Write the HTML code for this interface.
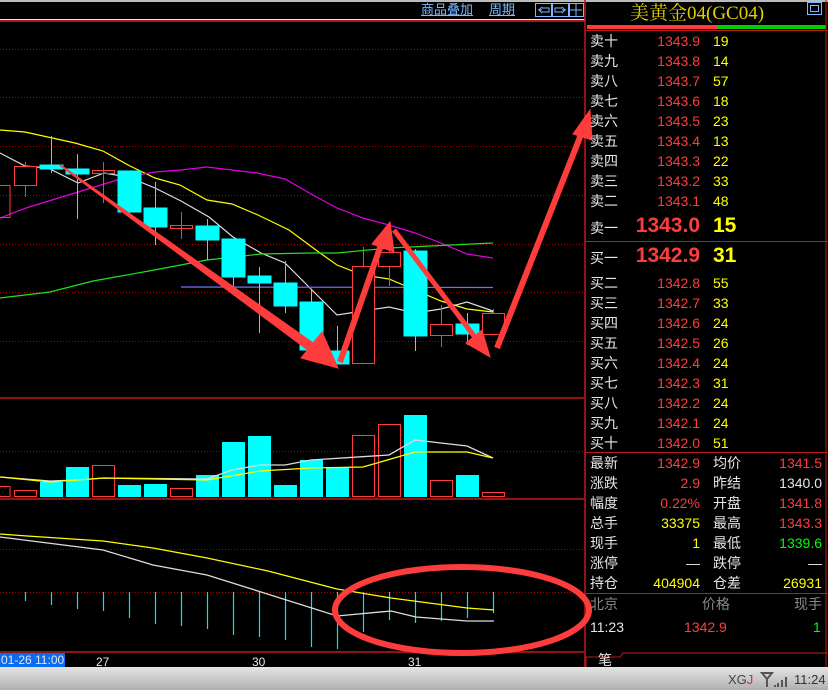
<!DOCTYPE html>
<html><head><meta charset="utf-8"><style>
*{margin:0;padding:0;box-sizing:border-box}
body{width:828px;height:690px;background:#000;overflow:hidden;position:relative;font-family:"Liberation Sans","Noto Sans CJK SC",sans-serif;}
.t{position:absolute;white-space:nowrap;font-size:14px;line-height:16px}
.w{color:#e6e6e6}.r{color:#ff3c3c}.y{color:#ffff00}.g{color:#00ff00}.gr{color:#8a8a8a}
.ra{text-align:right}
</style></head><body>
<svg width="828" height="690" style="position:absolute;left:0;top:0" xmlns="http://www.w3.org/2000/svg">
<rect x="0" y="0" width="828" height="2" fill="#bbb"/>
<line x1="0" y1="19.5" x2="585" y2="19.5" fill="none" stroke="#eee" stroke-width="1"/>
<line x1="0" y1="21" x2="585" y2="21" stroke="#e02020" stroke-width="1.5"/>
<g stroke="#a00" stroke-dasharray="1,2" stroke-width="1">
<line x1="0" y1="49.5" x2="584" y2="49.5"/><line x1="0" y1="97.5" x2="584" y2="97.5"/>
<line x1="0" y1="146.5" x2="584" y2="146.5"/><line x1="0" y1="195.5" x2="584" y2="195.5"/>
<line x1="0" y1="244.5" x2="584" y2="244.5"/><line x1="0" y1="292.5" x2="584" y2="292.5"/>
<line x1="0" y1="341.5" x2="584" y2="341.5"/><line x1="0" y1="451.5" x2="584" y2="451.5"/>
<line x1="0" y1="549.5" x2="584" y2="549.5"/><line x1="0" y1="592.5" x2="584" y2="592.5"/>
</g>
<line x1="0" y1="398" x2="584" y2="398" stroke="#c01818" stroke-width="1.5"/>
<line x1="0" y1="499" x2="584" y2="499" stroke="#c01818" stroke-width="1.5"/>
<line x1="0" y1="652" x2="584" y2="652" stroke="#c01818" stroke-width="1.5"/>
<line x1="585" y1="0" x2="585" y2="667" stroke="#c01818" stroke-width="1.5"/>
<g fill="none" stroke-width="1.2">
<polyline stroke="#ffff00" points="0,130 25,132 75,143 103,151 130,166 155,178 180,185 207,200 232,204 258,215 289,230 320,253 337,265 363,275 389,279 415,290 441,301 467,309 493,312"/>
<polyline stroke="#ddd" points="0,153 25,166 48,168 78,183 104,173 128,177 155,188 181,201 209,217 233,237 261,253 285,263 311,289 337,315 363,311 389,307 415,313 441,309 467,302 493,311"/>
<polyline stroke="#e000e0" points="0,218 26,208 78,192 127,177 155,172 181,170 207,167 257,173 285,179 311,194 337,208 363,218 389,225 415,233 441,243 467,254 493,258"/>
<polyline stroke="#20e020" points="0,298 50,292 93,281 149,271 207,260 261,254 311,253 337,253 389,248 493,243"/>
<line x1="181" y1="287" x2="493" y2="287.5" stroke="#7070ff"/>
</g>
<g stroke-width="1">
<g stroke="#ff3c3c" fill="none">
<rect x="-12" y="185.5" width="22" height="32"/>
<line x1="25.5" y1="162" x2="25.5" y2="197"/><rect x="14.5" y="166.5" width="22" height="19" fill="#000"/>
<line x1="103.5" y1="162" x2="103.5" y2="203"/><rect x="92.5" y="170.5" width="22" height="3"/>
<line x1="181.5" y1="212" x2="181.5" y2="239"/><rect x="170.5" y="225.5" width="22" height="3"/>
<line x1="363.5" y1="247" x2="363.5" y2="364"/><rect x="352.5" y="266.5" width="22" height="97" fill="#000"/>
<line x1="389.5" y1="230" x2="389.5" y2="286"/><rect x="378.5" y="252.5" width="22" height="14" fill="#000"/>
<line x1="441.5" y1="305" x2="441.5" y2="347"/><rect x="430.5" y="324.5" width="22" height="11" fill="#000"/>
<line x1="493.5" y1="309" x2="493.5" y2="314"/><rect x="482.5" y="313.5" width="22" height="21" fill="#000"/>
</g>
<g stroke="#00ffff" fill="#00ffff">
<line x1="51.5" y1="136" x2="51.5" y2="173"/><rect x="40" y="165" width="23" height="4"/>
<line x1="77.5" y1="154" x2="77.5" y2="219"/><rect x="66" y="169" width="23" height="5"/>
<line x1="129.5" y1="171" x2="129.5" y2="217"/><rect x="118" y="171" width="23" height="41"/>
<line x1="155.5" y1="182" x2="155.5" y2="245"/><rect x="144" y="208" width="23" height="19"/>
<line x1="207.5" y1="219" x2="207.5" y2="260"/><rect x="196" y="226" width="23" height="14"/>
<line x1="233.5" y1="239" x2="233.5" y2="290"/><rect x="222" y="239" width="23" height="38"/>
<line x1="259.5" y1="267" x2="259.5" y2="333"/><rect x="248" y="276" width="23" height="7"/>
<line x1="285.5" y1="261" x2="285.5" y2="313"/><rect x="274" y="283" width="23" height="23"/>
<line x1="311.5" y1="290" x2="311.5" y2="350"/><rect x="300" y="302" width="23" height="48"/>
<line x1="337.5" y1="326" x2="337.5" y2="364"/><rect x="326" y="351" width="23" height="13"/>
<line x1="415.5" y1="249" x2="415.5" y2="351"/><rect x="404" y="251" width="23" height="85"/>
<line x1="467.5" y1="313" x2="467.5" y2="345"/><rect x="456" y="324" width="23" height="10"/>
</g>
</g>
<g fill="none" stroke="#ff3c3c">
<rect x="-12" y="486.5" width="22" height="10"/><rect x="14.5" y="490.5" width="22" height="6"/>
<rect x="92.5" y="465.5" width="22" height="31"/><rect x="170.5" y="488.5" width="22" height="8"/>
<rect x="352.5" y="435.5" width="22" height="61"/><rect x="378.5" y="424.5" width="22" height="72"/>
<rect x="430.5" y="480.5" width="22" height="16"/><rect x="482.5" y="492.5" width="22" height="4"/>
</g>
<g fill="#00ffff">
<rect x="40" y="482" width="23" height="15"/><rect x="66" y="467" width="23" height="30"/>
<rect x="118" y="485" width="23" height="12"/><rect x="144" y="484" width="23" height="13"/>
<rect x="196" y="475" width="23" height="22"/><rect x="222" y="442" width="23" height="55"/>
<rect x="248" y="436" width="23" height="61"/><rect x="274" y="485" width="23" height="12"/>
<rect x="300" y="460" width="23" height="37"/><rect x="326" y="467" width="23" height="30"/>
<rect x="404" y="415" width="23" height="82"/><rect x="456" y="475" width="23" height="22"/>
</g>
<g fill="none" stroke-width="1.3">
<polyline stroke="#ddd" points="0,477 50,481 78,480 104,478 207,479 232,470 260,465 285,465 311,460 389,455 415,440 467,446 493,458"/>
<polyline stroke="#ffff00" points="0,477 50,482 104,478 207,480 260,471 311,468 363,467 415,452 467,452 493,458"/>
</g>
<g stroke="#00e5f0" stroke-width="1.2">
<line x1="25.5" y1="592" x2="25.5" y2="601"/><line x1="51.5" y1="592" x2="51.5" y2="605"/>
<line x1="77.5" y1="592" x2="77.5" y2="609"/><line x1="103.5" y1="592" x2="103.5" y2="611"/>
<line x1="129.5" y1="592" x2="129.5" y2="618"/><line x1="155.5" y1="592" x2="155.5" y2="624"/>
<line x1="181.5" y1="592" x2="181.5" y2="626"/><line x1="207.5" y1="592" x2="207.5" y2="629"/>
<line x1="233.5" y1="592" x2="233.5" y2="635"/><line x1="259.5" y1="592" x2="259.5" y2="637"/>
<line x1="285.5" y1="592" x2="285.5" y2="640"/><line x1="311.5" y1="592" x2="311.5" y2="647"/>
<line x1="337.5" y1="592" x2="337.5" y2="649"/><line x1="363.5" y1="592" x2="363.5" y2="632"/>
<line x1="389.5" y1="592" x2="389.5" y2="620"/><line x1="415.5" y1="592" x2="415.5" y2="623"/>
<line x1="441.5" y1="592" x2="441.5" y2="621"/><line x1="467.5" y1="592" x2="467.5" y2="618"/>
<line x1="493.5" y1="592" x2="493.5" y2="613"/>
</g>
<g fill="none" stroke-width="1.3">
<polyline stroke="#ffff00" points="0,534 27,536 103,541 153,548 207,558 268,571 337,589 391,598 467,608 494,610"/>
<polyline stroke="#ddd" points="0,537 103,550 153,565 207,575 261,592 337,616 391,611 416,617 467,621 494,621"/>
</g>
<ellipse cx="462" cy="610" rx="127" ry="43" fill="none" stroke="#ff3c3c" stroke-width="6"/>
<g fill="#ff3c3c" stroke="#ff3c3c" stroke-linecap="butt">
<polygon points="60.6,164.2 320.9,347.9 315.1,356.1 59.4,165.8" stroke="none"/>
<polygon points="338,368 301,358 322,332"/>
<line x1="340" y1="362" x2="382" y2="242" stroke-width="6"/>
<polygon points="390,222 394,252 372,244"/>
<line x1="394" y1="230" x2="477" y2="340" stroke-width="5"/>
<polygon points="490,357 466,343 482,330"/>
<line x1="497" y1="348" x2="582" y2="132" stroke-width="6"/>
<polygon points="590,110 592,140 573,134"/>
</g>
<g fill="none" stroke="#7ab8ff" stroke-width="1">
<rect x="535.5" y="3.5" width="16" height="13"/><rect x="552.5" y="3.5" width="16" height="13"/><rect x="569.5" y="3.5" width="14" height="13"/>
<path d="M538 10h4M542 7l-3 3 3 3M542 8h7v4h-7M566 10h-4M562 7l3 3-3 3M562 8h-7v4h7M570 10h12M576 4v12"/>
<rect x="807.5" y="2.5" width="14" height="12"/><rect x="810.5" y="5.5" width="8" height="6"/>
</g>
<rect x="587" y="25" width="130" height="4" fill="#ff3c3c"/><rect x="717" y="25" width="109" height="4" fill="#00d000"/>
<line x1="585" y1="30.5" x2="828" y2="30.5" stroke="#c01818"/>
<line x1="585" y1="241.5" x2="828" y2="241.5" stroke="#c01818"/>
<line x1="585" y1="452.5" x2="828" y2="452.5" stroke="#c01818"/>
<line x1="585" y1="593.5" x2="828" y2="593.5" stroke="#c01818"/>
<path d="M586 667V657h34l3-4h205" fill="none" stroke="#c01818"/>
<line x1="826" y1="0" x2="826" y2="667" stroke="#c01818"/>
<defs><linearGradient id="gb" x1="0" y1="0" x2="0" y2="1"><stop offset="0" stop-color="#e4e4e4"/><stop offset="1" stop-color="#b0b0b0"/></linearGradient></defs>
<rect x="0" y="667" width="828" height="23" fill="url(#gb)"/>
<rect x="0" y="653" width="65" height="14" fill="#0a6cf0"/>
<path d="M762 673h10l-5 6zM767 679v8M774 686h2M778 683v4M782 680v7M786 677v10" stroke="#555" stroke-width="2" fill="none"/>
</svg>
<div class="t" style="left:421px;top:2px;color:#7ab8ff;text-decoration:underline;font-size:13px">商品叠加</div>
<div class="t" style="left:489px;top:2px;color:#7ab8ff;text-decoration:underline;font-size:13px">周期</div>
<div class="t" style="left:630px;top:4px;color:#e0d000;font-size:19px;line-height:20px;font-family:'Liberation Serif','Noto Serif CJK SC',serif">美黄金04(GC04)</div>
<div class="t w" style="left:1px;top:654px;font-size:12px;line-height:13px">01-26 11:00</div>
<div class="t w" style="left:96px;top:654px;font-size:12px">27</div>
<div class="t w" style="left:252px;top:654px;font-size:12px">30</div>
<div class="t w" style="left:408px;top:654px;font-size:12px">31</div>
<div style="position:absolute;left:590px;top:33px;width:236px;font-size:14px">
<div style="position:relative;height:200px">
<div class="t w" style="left:0;top:0">卖十</div><div class="t r ra" style="left:40px;width:70px;top:0">1343.9</div><div class="t y" style="left:123px;top:0">19</div>
<div class="t w" style="left:0;top:20px">卖九</div><div class="t r ra" style="left:40px;width:70px;top:20px">1343.8</div><div class="t y" style="left:123px;top:20px">14</div>
<div class="t w" style="left:0;top:40px">卖八</div><div class="t r ra" style="left:40px;width:70px;top:40px">1343.7</div><div class="t y" style="left:123px;top:40px">57</div>
<div class="t w" style="left:0;top:60px">卖七</div><div class="t r ra" style="left:40px;width:70px;top:60px">1343.6</div><div class="t y" style="left:123px;top:60px">18</div>
<div class="t w" style="left:0;top:80px">卖六</div><div class="t r ra" style="left:40px;width:70px;top:80px">1343.5</div><div class="t y" style="left:123px;top:80px">23</div>
<div class="t w" style="left:0;top:100px">卖五</div><div class="t r ra" style="left:40px;width:70px;top:100px">1343.4</div><div class="t y" style="left:123px;top:100px">13</div>
<div class="t w" style="left:0;top:120px">卖四</div><div class="t r ra" style="left:40px;width:70px;top:120px">1343.3</div><div class="t y" style="left:123px;top:120px">22</div>
<div class="t w" style="left:0;top:140px">卖三</div><div class="t r ra" style="left:40px;width:70px;top:140px">1343.2</div><div class="t y" style="left:123px;top:140px">33</div>
<div class="t w" style="left:0;top:160px">卖二</div><div class="t r ra" style="left:40px;width:70px;top:160px">1343.1</div><div class="t y" style="left:123px;top:160px">48</div>
<div class="t w" style="left:0;top:187px">卖一</div><div class="t r ra" style="left:20px;width:90px;top:181px;font-size:21px;line-height:24px;font-weight:bold">1343.0</div><div class="t y" style="left:123px;top:181px;font-size:21px;line-height:24px;font-weight:bold">15</div>
<div class="t w" style="left:0;top:217px">买一</div><div class="t r ra" style="left:20px;width:90px;top:211px;font-size:21px;line-height:24px;font-weight:bold">1342.9</div><div class="t y" style="left:123px;top:211px;font-size:21px;line-height:24px;font-weight:bold">31</div>
<div class="t w" style="left:0;top:242px">买二</div><div class="t r ra" style="left:40px;width:70px;top:242px">1342.8</div><div class="t y" style="left:123px;top:242px">55</div>
<div class="t w" style="left:0;top:262px">买三</div><div class="t r ra" style="left:40px;width:70px;top:262px">1342.7</div><div class="t y" style="left:123px;top:262px">33</div>
<div class="t w" style="left:0;top:282px">买四</div><div class="t r ra" style="left:40px;width:70px;top:282px">1342.6</div><div class="t y" style="left:123px;top:282px">24</div>
<div class="t w" style="left:0;top:302px">买五</div><div class="t r ra" style="left:40px;width:70px;top:302px">1342.5</div><div class="t y" style="left:123px;top:302px">26</div>
<div class="t w" style="left:0;top:322px">买六</div><div class="t r ra" style="left:40px;width:70px;top:322px">1342.4</div><div class="t y" style="left:123px;top:322px">24</div>
<div class="t w" style="left:0;top:342px">买七</div><div class="t r ra" style="left:40px;width:70px;top:342px">1342.3</div><div class="t y" style="left:123px;top:342px">31</div>
<div class="t w" style="left:0;top:362px">买八</div><div class="t r ra" style="left:40px;width:70px;top:362px">1342.2</div><div class="t y" style="left:123px;top:362px">24</div>
<div class="t w" style="left:0;top:382px">买九</div><div class="t r ra" style="left:40px;width:70px;top:382px">1342.1</div><div class="t y" style="left:123px;top:382px">24</div>
<div class="t w" style="left:0;top:402px">买十</div><div class="t r ra" style="left:40px;width:70px;top:402px">1342.0</div><div class="t y" style="left:123px;top:402px">51</div>
<div class="t w" style="left:0;top:422px">最新</div><div class="t r ra" style="left:40px;width:70px;top:422px">1342.9</div><div class="t w" style="left:123px;top:422px">均价</div><div class="t r ra" style="left:160px;width:72px;top:422px">1341.5</div>
<div class="t w" style="left:0;top:442px">涨跌</div><div class="t r ra" style="left:40px;width:70px;top:442px">2.9</div><div class="t w" style="left:123px;top:442px">昨结</div><div class="t w ra" style="left:160px;width:72px;top:442px">1340.0</div>
<div class="t w" style="left:0;top:462px">幅度</div><div class="t r ra" style="left:40px;width:70px;top:462px">0.22%</div><div class="t w" style="left:123px;top:462px">开盘</div><div class="t r ra" style="left:160px;width:72px;top:462px">1341.8</div>
<div class="t w" style="left:0;top:482px">总手</div><div class="t y ra" style="left:40px;width:70px;top:482px">33375</div><div class="t w" style="left:123px;top:482px">最高</div><div class="t r ra" style="left:160px;width:72px;top:482px">1343.3</div>
<div class="t w" style="left:0;top:502px">现手</div><div class="t y ra" style="left:40px;width:70px;top:502px">1</div><div class="t w" style="left:123px;top:502px">最低</div><div class="t g ra" style="left:160px;width:72px;top:502px">1339.6</div>
<div class="t w" style="left:0;top:522px">涨停</div><div class="t w ra" style="left:40px;width:70px;top:522px">—</div><div class="t w" style="left:123px;top:522px">跌停</div><div class="t w ra" style="left:160px;width:72px;top:522px">—</div>
<div class="t w" style="left:0;top:542px">持仓</div><div class="t y ra" style="left:40px;width:70px;top:542px">404904</div><div class="t w" style="left:123px;top:542px">仓差</div><div class="t y ra" style="left:160px;width:72px;top:542px">26931</div>
<div class="t gr" style="left:0;top:563px">北京</div><div class="t gr" style="left:112px;top:563px">价格</div><div class="t gr" style="left:204px;top:563px">现手</div>
<div class="t w" style="left:0;top:586px">11:23</div><div class="t r" style="left:94px;top:586px">1342.9</div><div class="t g" style="left:223px;top:586px">1</div>
<div class="t w" style="left:8px;top:619px">笔</div>
</div></div>
<div class="t" style="left:728px;top:672px;color:#444;font-size:13px">XG<span style="color:#e22">J</span></div>
<div class="t" style="left:794px;top:672px;color:#333;font-size:13px">11:24</div>
</body></html>
